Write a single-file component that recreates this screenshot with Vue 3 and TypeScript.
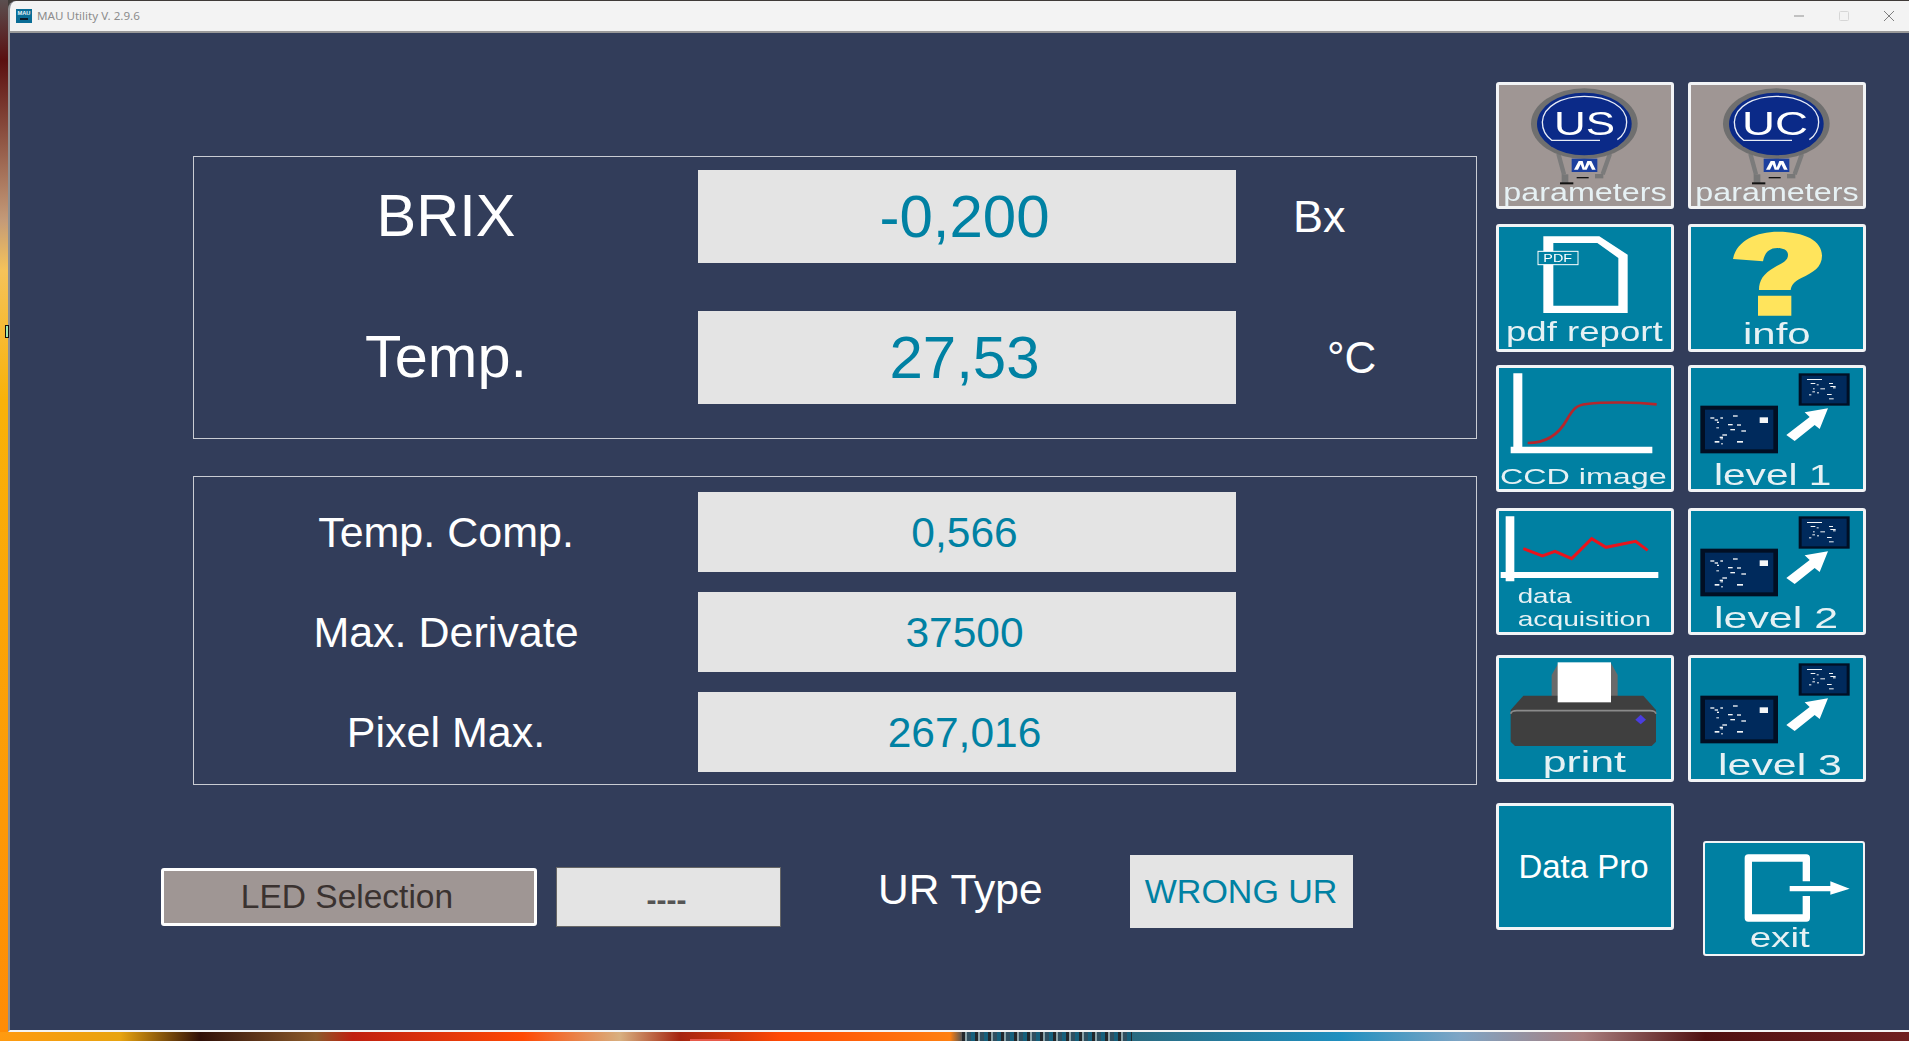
<script setup lang="ts">
interface Reading {
  label: string
  value: string
}

const secondary: Reading[] = [
  { label: 'Temp. Comp.', value: '0,566' },
  { label: 'Max. Derivate', value: '37500' },
  { label: 'Pixel Max.', value: '267,016' },
]

const bigDots: number[][] = [
  [692, 187, 12, 4], [705, 193, 10, 4], [722, 187, 8, 4], [712, 200, 6, 4], [760, 181, 14, 4],
  [745, 207, 14, 4], [772, 208, 12, 4], [710, 217, 8, 3], [752, 222, 14, 4], [785, 226, 14, 4],
  [728, 238, 14, 4], [720, 245, 10, 4], [705, 258, 14, 5], [722, 250, 8, 3], [724, 265, 6, 3],
  [772, 258, 18, 5], [840, 187, 25, 17],
]
const smallDots: number[][] = [
  [982, 72, 45, 3], [993, 84, 14, 3], [1011, 88, 6, 3], [1048, 84, 12, 3], [1052, 93, 16, 3],
  [1060, 97, 8, 3], [1022, 100, 14, 3], [1000, 100, 5, 3], [998, 109, 8, 3], [1012, 112, 6, 3],
  [988, 118, 7, 3], [1042, 117, 14, 3], [1048, 130, 14, 3],
]
</script>

<template>
  <div class="desktop">
    <svg class="defs" width="0" height="0" aria-hidden="true">
      <defs>
        <g id="bulb">
          <path d="M235 250 L252 312 M390 250 L368 312" stroke="#7b7b7b" stroke-width="13" fill="none" />
          <ellipse cx="313" cy="160" rx="160" ry="106" fill="#6f6f6f" />
          <ellipse cx="313" cy="161" rx="142" ry="94" fill="#0b2a88" />
          <path d="M360 210 H215 C195 195 187 175 187 155 C190 105 250 78 313 78 C385 78 440 110 440 155 C440 180 428 197 412 208" fill="none" stroke="#e8ecf6" stroke-width="4" />
          <rect x="275" y="265" width="77" height="40" fill="#1c3f9e" />
          <path d="M282 298 L296 272 L308 272 L314 292 L322 272 L334 272 L347 298 L336 298 L328 282 L320 298 L308 298 L302 282 L294 298 Z" fill="#fff" />
          <rect x="245" y="312" width="20" height="26" fill="#777" />
          <rect x="240" y="336" width="40" height="6" fill="#111" />
          <rect x="290" y="320" width="36" height="4" fill="#111" />
          <rect x="345" y="311" width="25" height="13" fill="#777" />
        </g>
        <g id="level">
          <rect x="662" y="152" width="233" height="143" fill="#010f24" />
          <rect x="676" y="164" width="205" height="119" fill="#002a5c" />
          <rect x="957" y="55" width="153" height="97" fill="#010f24" />
          <rect x="966" y="62" width="135" height="83" fill="#002a5c" />
          <rect v-for="(d, i) in bigDots" :key="'b' + i" :x="d[0]" :y="d[1]" :width="d[2]" :height="d[3]" fill="#f4f6f8" />
          <rect v-for="(d, i) in smallDots" :key="'s' + i" :x="d[0]" :y="d[1]" :width="d[2]" :height="d[3]" fill="#f4f6f8" />
          <path d="M920 240 L945 258 L1005 210 L1020 222 L1045 160 L975 172 L990 186 Z" fill="#fff" />
        </g>
      </defs>
    </svg>

    <div class="grip"></div>
    <div class="taskbar-mark"></div>

    <div class="window">
      <header class="titlebar">
        <svg class="app-icon" viewBox="0 0 16 14">
          <rect width="16" height="14" fill="#0a6d96" />
          <text x="1.5" y="6" class="icon-text" font-size="5.5" font-weight="700" textLength="13" lengthAdjust="spacingAndGlyphs">MAU</text>
          <rect x="4" y="9" width="8" height="2" fill="#0b1a2a" />
        </svg>
        <span class="app-title">MAU Utility V. 2.9.6</span>
        <div class="controls">
          <svg class="ctl" viewBox="0 0 10 10"><path d="M0 5H10" stroke="#8f8f8f" stroke-width="1" /></svg>
          <svg class="ctl" viewBox="0 0 10 10"><rect x=".5" y=".5" width="9" height="9" rx="1" fill="none" stroke="#d6d6d6" /></svg>
          <svg class="ctl" viewBox="0 0 10 10"><path d="M0 0L10 10M10 0L0 10" stroke="#7f7f7f" stroke-width="1" /></svg>
        </div>
      </header>

      <main class="content">
        <section class="readings">
          <div class="panel panel-primary">
            <div class="row">
              <div class="label-big">BRIX</div>
              <div class="field field-big">-0,200</div>
              <div class="unit unit-bx">Bx</div>
            </div>
            <div class="row">
              <div class="label-big">Temp.</div>
              <div class="field field-big">27,53</div>
              <div class="unit unit-c">°C</div>
            </div>
          </div>

          <div class="panel panel-secondary">
            <div v-for="r in secondary" :key="r.label" class="row">
              <div class="label-mid">{{ r.label }}</div>
              <div class="field field-mid">{{ r.value }}</div>
            </div>
          </div>

          <div class="footer-row">
            <button class="led">LED Selection</button>
            <div class="led-value">----</div>
            <div class="ur-label">UR Type</div>
            <div class="ur-value">WRONG UR</div>
          </div>
        </section>

        <aside class="actions">
          <button class="tile tile-grey">
            <svg viewBox="57 44 516 363">
              <use href="#bulb" />
              <text x="222" y="195" class="ink" font-size="98" textLength="183" lengthAdjust="spacingAndGlyphs">US</text>
              <text x="70" y="392" class="soft" font-size="80" textLength="490" lengthAdjust="spacingAndGlyphs">parameters</text>
            </svg>
          </button>
          <button class="tile tile-grey">
            <svg viewBox="634 44 516 363">
              <use href="#bulb" transform="translate(577 0)" />
              <text x="787" y="195" class="ink" font-size="98" textLength="198" lengthAdjust="spacingAndGlyphs">UC</text>
              <text x="647" y="392" class="soft" font-size="80" textLength="490" lengthAdjust="spacingAndGlyphs">parameters</text>
            </svg>
          </button>

          <button class="tile tile-tall">
            <svg viewBox="57 472 516 363">
              <path fill-rule="evenodd" fill="#fff" d="M190 497H358L443 552V727H190ZM220 517V705H415V562L352 517Z" />
              <rect x="174" y="542" width="120" height="40" fill="#0080a2" stroke="#fff" stroke-width="3" />
              <text x="190" y="573" class="ink" font-size="32" textLength="86" lengthAdjust="spacingAndGlyphs">PDF</text>
              <text x="78" y="812" class="soft" font-size="82" textLength="470" lengthAdjust="spacingAndGlyphs">pdf report</text>
            </svg>
          </button>
          <button class="tile tile-tall">
            <svg viewBox="634 472 516 363">
              <path fill="#ffe45c" d="M760 565C770 510 830 483 895 483C975 483 1027 510 1027 555C1027 590 1000 605 965 622C940 635 935 645 933 658H838C838 630 850 610 885 590C910 575 925 570 925 552C925 538 910 532 893 532C870 532 855 545 850 572ZM835 675H935V735H835Z" />
              <text x="790" y="820" class="soft" font-size="90" textLength="203" lengthAdjust="spacingAndGlyphs">info</text>
            </svg>
          </button>

          <button class="tile">
            <svg viewBox="57 39 516 363">
              <path d="M100 55H127V275H517V295H92V275H100Z" fill="#fff" />
              <path d="M143 264C200 264 235 240 260 195C280 160 290 150 320 147C380 140 470 142 530 148" fill="none" stroke="#b5262c" stroke-width="8" />
              <text x="60" y="386" class="soft" font-size="68" textLength="500" lengthAdjust="spacingAndGlyphs">CCD image</text>
            </svg>
          </button>
          <button class="tile">
            <svg viewBox="634 39 516 363">
              <use href="#level" />
              <text x="703" y="390" class="soft" font-size="90" textLength="352" lengthAdjust="spacingAndGlyphs">level 1</text>
            </svg>
          </button>

          <button class="tile">
            <svg viewBox="57 469 516 363">
              <path d="M77 485H103V652H535V670H103V680H77V670H62V652H77Z" fill="#fff" />
              <polyline points="130,582 187,604 225,590 275,612 335,552 378,578 467,560 503,587" fill="none" stroke="#e8141c" stroke-width="9" />
              <text x="113" y="745" class="soft" font-size="62" textLength="162" lengthAdjust="spacingAndGlyphs">data</text>
              <text x="113" y="815" class="soft" font-size="62" textLength="400" lengthAdjust="spacingAndGlyphs">acquisition</text>
            </svg>
          </button>
          <button class="tile">
            <svg viewBox="634 39 516 363">
              <use href="#level" />
              <text x="703" y="390" class="soft" font-size="90" textLength="372" lengthAdjust="spacingAndGlyphs">level 2</text>
            </svg>
          </button>

          <button class="tile">
            <svg viewBox="57 39 516 363">
              <path d="M215 160V90L235 55V160ZM393 55L413 90V160H393Z" fill="#6a6a6a" />
              <path d="M130 152H490L528 195V290L515 303H105L92 290V195Z" fill="#3f3f3f" />
              <path d="M92 206Q95 197 110 197H510Q525 197 528 206" fill="none" stroke="#8a8a8a" stroke-width="5" />
              <rect x="233" y="52" width="160" height="120" fill="#fff" />
              <path d="M482 209L498 224L482 238L466 224Z" fill="#4a3de0" />
              <text x="188" y="380" class="soft" font-size="90" textLength="250" lengthAdjust="spacingAndGlyphs">print</text>
            </svg>
          </button>
          <button class="tile">
            <svg viewBox="634 39 516 363">
              <use href="#level" />
              <text x="715" y="389" class="soft" font-size="86" textLength="372" lengthAdjust="spacingAndGlyphs">level 3</text>
            </svg>
          </button>

          <button class="tile tile-text">Data Pro</button>
          <button class="tile tile-exit">
            <svg viewBox="676 593 474 333">
              <path d="M980 708V638H806V818H980V752" fill="none" stroke="#fff" stroke-width="22" stroke-linejoin="round" />
              <path d="M930 722H1052V708L1110 730L1052 748V738H930Z" fill="#fff" />
              <text x="810" y="906" class="soft" font-size="82" textLength="180" lengthAdjust="spacingAndGlyphs">exit</text>
            </svg>
          </button>
        </aside>
      </main>
    </div>
  </div>
</template>

<style>
html,
body {
  margin: 0;
  overflow: hidden;
}
</style>

<style scoped>
.desktop {
  position: relative;
  box-sizing: border-box;
  width: 1909px;
  height: 1041px;
  padding: 1px 0 9px 8px;
  overflow: hidden;
  font-family: 'Liberation Sans', Arial, sans-serif;
  background:
    repeating-linear-gradient(90deg, #23282c 0, #23282c 3px, #8aa2a8 3px, #8aa2a8 5px, #2f4f60 5px, #2f4f60 9px, #16607c 9px, #16607c 13px) 962px bottom / 170px 9px no-repeat,
    linear-gradient(90deg, #ff9a10 0, #e8a410 120px, #301008 200px, #8b5a2a 316px, #c02010 353px, #ff4a05 523px, #d8b080 620px, #a52510 680px, #ff4a05 780px, #ff8010 950px, #555 962px, #2a6a80 1132px, #1f8fbf 1340px, #7fa5c5 1460px, #aa7f7f 1583px, #501010 1705px, #702020 1909px) bottom left / 100% 9px no-repeat,
    linear-gradient(180deg, #5b4f50 0, #5a1010 60px, #c49a78 220px, #f5c35a 270px, #f9b208 400px, #ff8c05 1032px) left top / 8px 100% no-repeat,
    #3f3a38;
}
.defs {
  position: absolute;
}
.grip {
  position: absolute;
  left: 5px;
  top: 325px;
  width: 2px;
  height: 11px;
  background: #9fe8b0;
  border: 1px solid #111;
}
.taskbar-mark {
  position: absolute;
  left: 690px;
  bottom: 0;
  width: 40px;
  height: 2px;
  background: #e85a4a;
}
.window {
  display: flex;
  flex-direction: column;
  height: 100%;
  box-sizing: border-box;
  border-left: 2px solid #8f9092;
  border-bottom: 2px solid #f4f4f4;
  border-top-left-radius: 8px;
  overflow: hidden;
  background: #323d5a;
}
.titlebar {
  display: flex;
  align-items: center;
  height: 30px;
  flex: none;
  background: #f3f3f3;
  border-bottom: 2px solid #9a9a9a;
  padding-left: 6px;
}
.app-icon {
  width: 16px;
  height: 14px;
}
.icon-text {
  fill: #e8f4f8;
  font-family: 'Liberation Sans', sans-serif;
}
.app-title {
  margin-left: 5px;
  margin-top: -1px;
  font-family: 'Noto Sans', 'Open Sans', sans-serif;
  font-size: 11.6px;
  color: #8c8c8c;
}
.controls {
  display: flex;
  align-items: center;
  gap: 35px;
  margin-left: auto;
  margin-right: 15px;
}
.ctl {
  width: 10px;
  height: 10px;
}
.content {
  display: flex;
  flex: 1;
  min-height: 0;
  padding-top: 49px;
}
.readings {
  width: 1486px;
  box-sizing: border-box;
  padding: 74px 0 0 151px;
}
.panel {
  box-sizing: border-box;
  width: 1284px;
  margin-left: 32px;
  border: 1px solid #c9ccd3;
}
.panel-primary {
  display: flex;
  flex-direction: column;
  gap: 48px;
  height: 283px;
  padding-top: 13px;
}
.panel-secondary {
  display: flex;
  flex-direction: column;
  gap: 20px;
  height: 309px;
  margin-top: 37px;
  padding-top: 15px;
}
.row {
  display: flex;
  align-items: center;
}
.label-big,
.label-mid {
  width: 504px;
  text-align: center;
  color: #fff;
}
.label-big {
  padding-bottom: 2px;
  font-size: 59.5px;
}
.label-mid {
  padding-top: 1px;
  font-size: 43px;
}
.field {
  display: flex;
  align-items: center;
  justify-content: center;
  box-sizing: border-box;
  width: 538px;
  padding-right: 5px;
  background: #e4e4e4;
  color: #0081a3;
}
.field-big {
  height: 93px;
  font-size: 60px;
}
.field-mid {
  height: 80px;
  padding-top: 1px;
  font-size: 42.5px;
}
.unit {
  color: #fff;
}
.unit-bx {
  margin-left: 57px;
  font-size: 45px;
}
.unit-c {
  margin-left: 91px;
  font-size: 44px;
}
.footer-row {
  display: flex;
  align-items: flex-start;
  margin-top: 70px;
}
.led {
  box-sizing: border-box;
  width: 376px;
  height: 58px;
  margin-top: 13px;
  padding: 0 4px 0 0;
  background: #9f9694;
  border: 3px solid #fff;
  border-radius: 3px;
  color: #3a3230;
  font-family: inherit;
  font-size: 33.5px;
}
.led-value {
  display: flex;
  align-items: center;
  justify-content: center;
  box-sizing: border-box;
  width: 225px;
  height: 60px;
  margin-top: 12px;
  margin-left: 19px;
  padding: 5px 4px 0 0;
  background: #e4e4e4;
  border: 1px solid #666;
  color: #555;
  font-size: 30px;
  font-weight: 700;
}
.ur-label {
  margin-left: 97px;
  margin-top: 11px;
  color: #fff;
  font-size: 42.5px;
  line-height: 48px;
}
.ur-value {
  display: flex;
  align-items: center;
  justify-content: center;
  width: 223px;
  height: 73px;
  margin-left: 87px;
  background: #e4e4e4;
  color: #0081a3;
  font-size: 34px;
}
.actions {
  display: grid;
  grid-template-columns: 178px 178px;
  grid-template-rows: 142px 141px 143px 147px 148px auto;
  column-gap: 14px;
  align-items: start;
}
.tile {
  display: block;
  box-sizing: border-box;
  width: 178px;
  height: 127px;
  padding: 0;
  background: #0080a2;
  border: 3px solid #f2f4f6;
  border-radius: 3px;
}
.tile svg {
  display: block;
  width: 172px;
  height: 121px;
  overflow: visible;
  filter: blur(0.45px);
}
.tile-tall {
  height: 128px;
}
.tile-grey {
  background: #9f9694;
}
.tile-text {
  padding-right: 3px;
  color: #fff;
  font-family: inherit;
  font-size: 33px;
}
.tile-exit {
  justify-self: end;
  width: 162px;
  height: 115px;
  margin-top: 38px;
  margin-right: 1px;
  border-width: 2px;
}
.tile-exit svg {
  width: 158px;
  height: 111px;
}
.ink {
  fill: #fff;
}
.soft {
  fill: #e6f1f4;
}
</style>
